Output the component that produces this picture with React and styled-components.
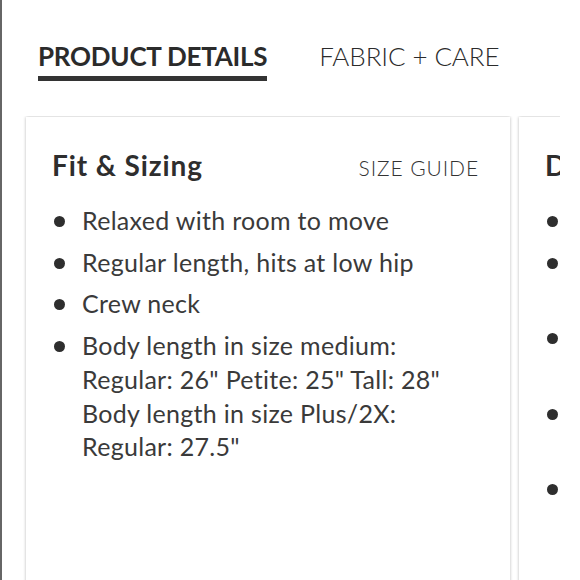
import React from "react";
import styled, { createGlobalStyle } from "styled-components";

const GlobalStyle = createGlobalStyle`
  html, body { margin: 0; padding: 0; background: #fff; }
  body { font-family: Lato, "Noto Sans", sans-serif; color: #333; }
`;

const Page = styled.div`
  width: 580px;
  height: 580px;
  box-sizing: border-box;
  border-left: 2px solid #666;
  overflow: hidden;
  background: #fff;
`;

const Tabs = styled.nav`
  display: flex;
  align-items: flex-start;
  gap: 52px;
  padding: 42px 0 0 36px;
  height: 76px;
  box-sizing: border-box;
`;

const Tab = styled.div`
  font-size: 26px;
  line-height: 29px;
  font-weight: ${(p) => (p.$active ? 700 : 300)};
  letter-spacing: ${(p) => (p.$active ? "-0.25px" : "-0.1px")};
  color: #2b2b2b;
  padding-bottom: 5px;
  border-bottom: 5px solid ${(p) => (p.$active ? "#333" : "transparent")};
`;

const Slider = styled.div`
  display: flex;
  gap: 7px;
  width: 558px;
  overflow: hidden;
  padding: 1px 0 0 22px;
  margin-top: 40px;
  box-sizing: border-box;
  height: 500px;
`;

const Card = styled.section`
  flex: 0 0 ${(p) => p.$width}px;
  box-sizing: border-box;
  background: #fff;
  box-shadow: 0 0 3px rgba(0, 0, 0, 0.28);
  margin-left: 2px;
  padding: 31px 31px 0 26px;
`;

const CardHead = styled.header`
  display: flex;
  justify-content: space-between;
  align-items: baseline;
  margin-bottom: 22px;
`;

const Title = styled.h2`
  margin: 0;
  font-size: 28px;
  line-height: 34px;
  font-weight: 700;
  letter-spacing: 0.9px;
  color: #2e2e2e;
  white-space: nowrap;
`;

const Guide = styled.span`
  font-size: 21px;
  font-weight: 300;
  letter-spacing: 0.9px;
  color: #333;
`;

const List = styled.ul`
  margin: 0;
  padding: 0;
  list-style: none;
  display: flex;
  flex-direction: column;
  gap: ${(p) => p.$gap}px;
`;

const Item = styled.li`
  position: relative;
  padding-left: 30px;
  font-size: 25px;
  line-height: 33.7px;
  font-weight: 400;
  letter-spacing: 0.3px;
  color: #3a3a3a;
  white-space: nowrap;
  &::before {
    content: "";
    position: absolute;
    left: 2px;
    top: 12px;
    width: 11px;
    height: 11px;
    border-radius: 50%;
    background: #2e2e2e;
  }
`;

export default function App() {
  return (
    <>
      <GlobalStyle />
      <Page>
        <Tabs>
          <Tab $active>PRODUCT DETAILS</Tab>
          <Tab>FABRIC + CARE</Tab>
        </Tabs>
        <Slider>
          <Card $width={484}>
            <CardHead>
              <Title>Fit &amp; Sizing</Title>
              <Guide>SIZE GUIDE</Guide>
            </CardHead>
            <List $gap={8}>
              <Item>Relaxed with room to move</Item>
              <Item>Regular length, hits at low hip</Item>
              <Item>Crew neck</Item>
              <Item>
                Body length in size medium:
                <br />
                Regular: 26" Petite: 25" Tall: 28"
                <br />
                Body length in size Plus/2X:
                <br />
                Regular: 27.5"
              </Item>
            </List>
          </Card>
          <Card $width={300}>
            <CardHead>
              <Title>Details</Title>
            </CardHead>
            <List $gap={8}>
              <Item>Soft</Item>
              <Item>
                Sweater
                <br />
                knit
              </Item>
              <Item>
                Cotton
                <br />
                blend
              </Item>
              <Item>
                Machine
                <br />
                wash
              </Item>
              <Item>Imported</Item>
            </List>
          </Card>
        </Slider>
      </Page>
    </>
  );
}
